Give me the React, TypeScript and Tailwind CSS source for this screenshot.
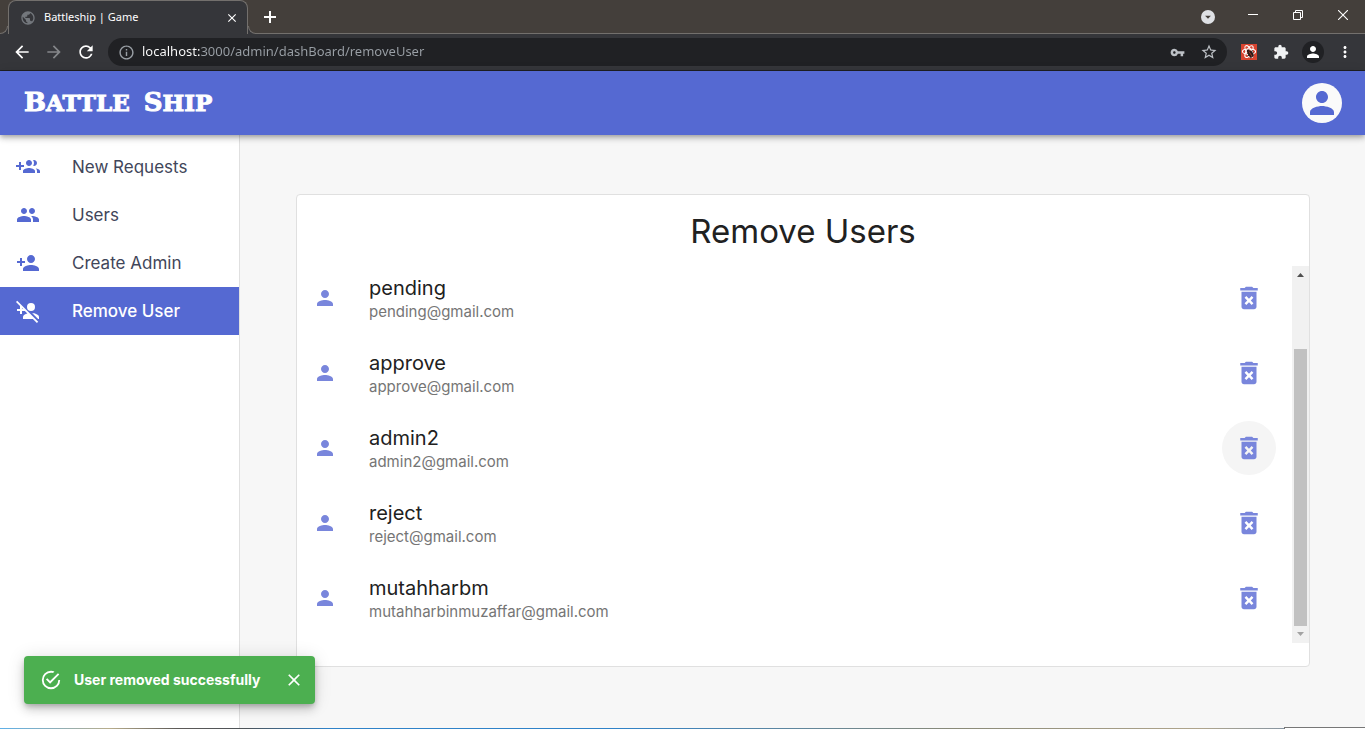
import type { ReactNode } from "react";
import {
  MdArrowBack,
  MdArrowForward,
  MdArrowDropDown,
  MdClose,
  MdDeleteForever,
  MdExtension,
  MdInfoOutline,
  MdMoreVert,
  MdPeople,
  MdPerson,
  MdPersonAddDisabled,
  MdPublic,
  MdRefresh,
  MdStarBorder,
  MdVpnKey,
} from "react-icons/md";

const users = [
  { name: "pending", email: "pending@gmail.com" },
  { name: "approve", email: "approve@gmail.com" },
  { name: "admin2", email: "admin2@gmail.com", hovered: true },
  { name: "reject", email: "reject@gmail.com" },
  { name: "mutahharbm", email: "mutahharbinmuzaffar@gmail.com" },
];

function GroupAddIcon() {
  return (
    <svg viewBox="0 0 24 24" className="size-6" fill="currentColor" aria-hidden="true">
      <path d="M8 10H5V7H3v3H0v2h3v3h2v-3h3v-2zm10 1c1.66 0 2.99-1.34 2.99-3S19.66 5 18 5c-.32 0-.63.05-.91.14.57.81.9 1.79.9 2.86s-.34 2.04-.9 2.86c.28.09.59.14.91.14zm-5 0c1.66 0 2.99-1.34 2.99-3S14.66 5 13 5c-1.66 0-3 1.34-3 3s1.34 3 3 3zm6.62 2.16c.83.73 1.38 1.66 1.38 2.84v2h3v-2c0-1.54-2.37-2.49-4.38-2.84zM13 13c-2 0-6 1-6 3v2h12v-2c0-2-4-3-6-3z" />
    </svg>
  );
}

function PersonAddIcon() {
  return (
    <svg viewBox="0 0 24 24" className="size-6" fill="currentColor" aria-hidden="true">
      <path d="M15 12c2.21 0 4-1.79 4-4s-1.79-4-4-4-4 1.79-4 4 1.79 4 4 4zm-9-2V7H4v3H1v2h3v3h2v-3h3v-2H6zm9 4c-2.67 0-8 1.34-8 4v2h16v-2c0-2.66-5.33-4-8-4z" />
    </svg>
  );
}

function SuccessIcon() {
  return (
    <svg viewBox="0 0 24 24" className="size-[22px]" fill="currentColor" aria-hidden="true">
      <path d="M20,12A8,8 0 0,1 12,20A8,8 0 0,1 4,12A8,8 0 0,1 12,4C12.76,4 13.5,4.11 14.2,4.31L15.77,2.74C14.61,2.26 13.34,2 12,2A10,10 0 0,0 2,12A10,10 0 0,0 12,22A10,10 0 0,0 22,12M7.91,10.08L6.5,11.5L11,16L21,6L19.59,4.58L11,13.17L7.91,10.08Z" />
    </svg>
  );
}

function ReactExtensionIcon() {
  return (
    <svg viewBox="0 0 16 16" className="size-4" fill="none" aria-hidden="true">
      <rect width="16" height="16" fill="#d8432f" />
      <g stroke="#fff" strokeWidth="1.1">
        <ellipse cx="8" cy="7.600" rx="6.6" ry="2.6" />
        <ellipse cx="8" cy="7.600" rx="6.6" ry="2.6" transform="rotate(60 8 7.600)" />
        <ellipse cx="8" cy="7.600" rx="6.6" ry="2.6" transform="rotate(120 8 7.600)" />
      </g>
      <ellipse cx="9.6" cy="10" rx="2.6" ry="3.4" fill="#2a1a18" transform="rotate(-30 9.6 10)" />
      <circle cx="7.2" cy="7" r="1.4" fill="#2a1a18" />
      <path d="M6 9.500l6-3M6.600 12l6-3.200M9 14l4-2.400" stroke="#2a1a18" strokeWidth=".9" />
      <path d="M8 7.500l3.400 5.600" stroke="#d8432f" strokeWidth=".6" />
    </svg>
  );
}

function ToolButton({ label, className = "", children }: { label: string; className?: string; children: ReactNode }) {
  return (
    <button type="button" aria-label={label} className={`grid size-6 shrink-0 place-items-center ${className}`}>
      {children}
    </button>
  );
}

function BrowserChrome() {
  return (
    <header className="shrink-0 font-['Noto_Sans',sans-serif] text-white">
      <div className="flex h-[34px] items-stretch border-b border-[#73706d] bg-[#443f3b]">
        <div className="-mb-px w-2 self-end bg-[#35363a]">
          <div className="h-2 rounded-br-lg border-r border-b border-[#73706d] bg-[#443f3b]" />
        </div>
        <div className="-mb-px flex w-60 items-center rounded-t-lg border-x border-t border-[#73706d] bg-[#35363a] pl-[11px]">
          <MdPublic className="size-4 text-[#73777c]" />
          <span className="ml-2 flex-1 text-[11px]">Battleship | Game</span>
          <ToolButton label="Close tab" className="mr-[3px]">
            <MdClose className="size-[14px]" />
          </ToolButton>
        </div>
        <div className="-mb-px w-2 self-end bg-[#35363a]">
          <div className="h-2 rounded-bl-lg border-b border-l border-[#73706d] bg-[#443f3b]" />
        </div>
        <div className="flex flex-1 items-center justify-between">
          <ToolButton label="New tab" className="ml-0.5">
            <svg viewBox="0 0 12 12" className="size-3" stroke="#fff" strokeWidth="2" aria-hidden="true">
              <path d="M6 0v12M0 6h12" />
            </svg>
          </ToolButton>
          <div className="flex items-center gap-[21px] pr-2.5">
            <ToolButton label="Search tabs">
              <span className="grid size-[14px] place-items-center rounded-full bg-[#dfe1e5] text-[#443f3b]">
                <MdArrowDropDown className="size-[14px]" />
              </span>
            </ToolButton>
            <ToolButton label="Minimize">
              <svg viewBox="0 0 10 10" className="size-2.5" stroke="#fff" aria-hidden="true">
                <path d="M0 2.500h10" />
              </svg>
            </ToolButton>
            <ToolButton label="Restore" className="pb-1">
              <svg viewBox="0 0 10 10" className="size-2.5" stroke="#fff" fill="none" aria-hidden="true">
                <path d="M.5 2.500h7v7h-7zM2.500 2.500v-2h7v7h-2" />
              </svg>
            </ToolButton>
            <ToolButton label="Close" className="pb-1">
              <svg viewBox="0 0 10 10" className="size-2.5" stroke="#fff" strokeWidth="1.1" aria-hidden="true">
                <path d="M0 0l10 10M10 0L0 10" />
              </svg>
            </ToolButton>
          </div>
        </div>
      </div>
      <div className="flex h-[37px] items-center gap-2 border-b border-[#202124] bg-[#35363a] pr-2 pl-[10px]">
        <ToolButton label="Back">
          <MdArrowBack className="size-5" />
        </ToolButton>
        <ToolButton label="Forward" className="text-[#85878a]">
          <MdArrowForward className="size-5" />
        </ToolButton>
        <ToolButton label="Reload">
          <MdRefresh className="size-5" />
        </ToolButton>
        <div className="ml-0.5 flex h-7 flex-1 items-center gap-2 rounded-full bg-[#202124] px-1.5">
          <ToolButton label="Site information" className="-mr-1 text-[#9aa0a6]">
            <MdInfoOutline className="size-[17px]" />
          </ToolButton>
          <input
            type="text"
            aria-label="Address"
            defaultValue="localhost:3000/admin/dashBoard/removeUser"
            className="min-w-0 flex-1 bg-[linear-gradient(90deg,#fff_58px,#9aa0a6_58px)] bg-clip-text text-[13px] text-transparent outline-none"
          />
          <ToolButton label="Saved passwords" className="text-[#bdc1c6]">
            <MdVpnKey className="size-[15px]" />
          </ToolButton>
          <ToolButton label="Bookmark" className="text-[#bdc1c6]">
            <MdStarBorder className="size-[18px]" />
          </ToolButton>
        </div>
        <ToolButton label="React extension" className="ml-0.5">
          <ReactExtensionIcon />
        </ToolButton>
        <ToolButton label="Extensions" className="text-[#f1f3f4]">
          <MdExtension className="size-4" />
        </ToolButton>
        <ToolButton label="Profile">
          <span className="grid size-[22px] place-items-center rounded-full bg-[#202124]">
            <MdPerson className="size-[18px]" />
          </span>
        </ToolButton>
        <ToolButton label="Menu">
          <MdMoreVert className="size-[18px]" />
        </ToolButton>
      </div>
    </header>
  );
}

function NavItem({ icon, label, active = false }: { icon: ReactNode; label: string; active?: boolean }) {
  return (
    <li>
      <a
        href="#"
        aria-current={active ? "page" : undefined}
        className={`flex h-12 items-center gap-8 px-4 text-[17px] leading-6 ${
          active ? "bg-[#5569d2] font-medium text-white" : "text-[#41465a]"
        }`}
      >
        <span className={active ? "text-white" : "text-[#5569d2]"}>{icon}</span>
        {label}
      </a>
    </li>
  );
}

export default function App() {
  return (
    <div className="relative flex min-h-screen flex-col bg-[#f7f7f7] font-[Inter,sans-serif] text-[#212121]">
      <BrowserChrome />
      <div className="z-10 flex h-16 shrink-0 items-center justify-between bg-[#5569d2] pr-[23px] pl-6 shadow-[0_2px_4px_-1px_rgba(0,0,0,0.2),0_4px_5px_rgba(0,0,0,0.14),0_1px_10px_rgba(0,0,0,0.12)]">
        <p className="pb-0.5 font-['DejaVu_Serif',serif] text-[23px] leading-8 font-bold text-white uppercase [-webkit-text-stroke:1px_#fff]">
          <span className="mr-1.5 inline-block first-letter:text-[26px]">Battle</span>{" "}
          <span className="inline-block first-letter:text-[26px]">Ship</span>
        </p>
        <button type="button" aria-label="Account" className="grid size-10 place-items-center rounded-full bg-[#fafafa] text-[#5569d2]">
          <MdPerson className="size-9" />
        </button>
      </div>
      <div className="flex flex-1">
        <nav aria-label="Dashboard" className="w-60 shrink-0 border-r border-[#e0e0e0] bg-white pt-2">
          <ul>
            <NavItem icon={<GroupAddIcon />} label="New Requests" />
            <NavItem icon={<MdPeople className="size-6" />} label="Users" />
            <NavItem icon={<PersonAddIcon />} label="Create Admin" />
            <NavItem icon={<MdPersonAddDisabled className="size-6" />} label="Remove User" active />
          </ul>
        </nav>
        <main className="min-w-0 flex-1 px-14 pt-[59px] pb-14">
          <section className="-mr-px rounded border border-[#e0e0e0] bg-white pb-[23px]">
            <h1 className="pt-4 pb-[15px] text-center text-[33px] leading-10">Remove Users</h1>
            <div className="flex h-[377px]">
              <ul className="flex flex-1 flex-col justify-end overflow-hidden pb-2">
                {users.map((user) => (
                  <li key={user.email} className="flex h-[75px] shrink-0 items-center px-4">
                    <MdPerson className="size-6 text-[#7986dc]" />
                    <div className="ml-8 flex-1">
                      <p className="text-xl leading-7">{user.name}</p>
                      <p className="text-[15px] leading-5 text-[#757575]">{user.email}</p>
                    </div>
                    <button
                      type="button"
                      aria-label={`Remove ${user.name}`}
                      className={`grid size-[54px] place-items-center rounded-full text-[#7986dc] ${
                        user.hovered ? "bg-[#f5f5f5]" : ""
                      }`}
                    >
                      <MdDeleteForever className="size-[30px]" />
                    </button>
                  </li>
                ))}
              </ul>
              <div className="flex w-[17px] flex-col items-center justify-between bg-[#f1f1f1]" aria-hidden="true">
                <svg viewBox="0 0 17 17" className="size-[17px]" fill="#505050">
                  <path d="M5 11h7L8.500 7z" />
                </svg>
                <div className="mt-auto h-[277px] w-[13px] bg-[#c1c1c1]" />
                <svg viewBox="0 0 17 17" className="size-[17px]" fill="#a3a3a3">
                  <path d="M5 6h7L8.500 10z" />
                </svg>
              </div>
            </div>
          </section>
        </main>
      </div>
      <footer className="flex h-px shrink-0 items-end bg-[linear-gradient(90deg,#5eb0e8,#b8ad8c_8%,#5d5a58_13%,#4d5358_18%,#2f82c8_24%,#2f82c8_45%,#8a8a78_70%,#b0a58c_88%,#5f86b8)]">
        <div className="ml-auto h-0.5 w-[81px] shrink-0 border-t border-l border-[#777] bg-white" />
      </footer>
      <div
        role="alert"
        className="absolute bottom-[25px] left-6 z-20 flex h-12 items-center rounded bg-[#4caf50] pr-[11px] pl-4 text-white shadow-[0_3px_5px_-1px_rgba(0,0,0,0.2),0_6px_10px_rgba(0,0,0,0.14),0_1px_18px_rgba(0,0,0,0.12)]"
      >
        <SuccessIcon />
        <span className="mr-6 ml-3 text-sm font-bold">User removed successfully</span>
        <button type="button" aria-label="Dismiss" className="grid size-5 place-items-center">
          <MdClose className="size-5" />
        </button>
      </div>
    </div>
  );
}
